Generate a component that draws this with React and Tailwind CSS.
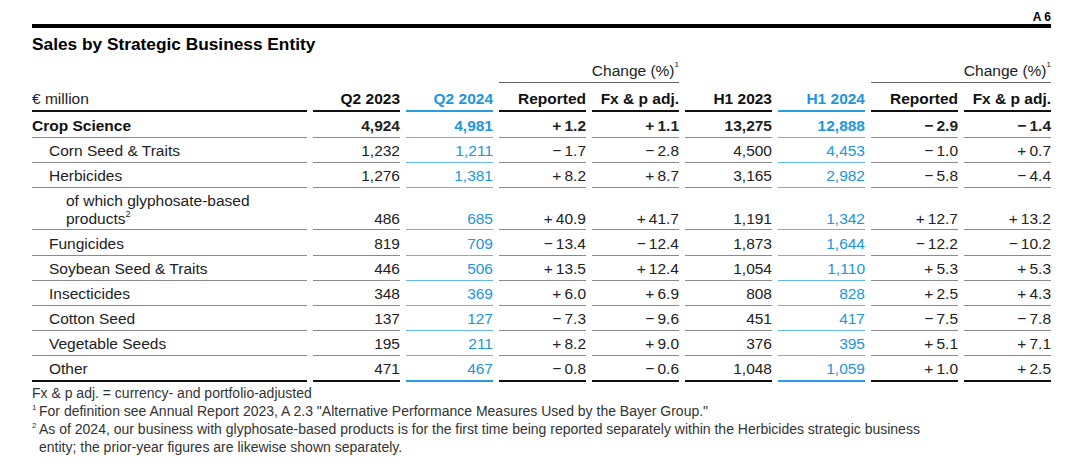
import React from "react";

// Zeilen der Tabelle: Label + 8 Werte (Q2 23, Q2 24, Rep, Fx, H1 23, H1 24, Rep, Fx)
const rows = [
  { label: "Crop Science", bold: true, indent: 0, vals: ["4,924", "4,981", "+1.2", "+1.1", "13,275", "12,888", "−2.9", "−1.4"] },
  { label: "Corn Seed & Traits", indent: 1, vals: ["1,232", "1,211", "−1.7", "−2.8", "4,500", "4,453", "−1.0", "+0.7"] },
  { label: "Herbicides", indent: 1, vals: ["1,276", "1,381", "+8.2", "+8.7", "3,165", "2,982", "−5.8", "−4.4"] },
  { label: "glyph", indent: 2, tall: true, vals: ["486", "685", "+40.9", "+41.7", "1,191", "1,342", "+12.7", "+13.2"] },
  { label: "Fungicides", indent: 1, vals: ["819", "709", "−13.4", "−12.4", "1,873", "1,644", "−12.2", "−10.2"] },
  { label: "Soybean Seed & Traits", indent: 1, vals: ["446", "506", "+13.5", "+12.4", "1,054", "1,110", "+5.3", "+5.3"] },
  { label: "Insecticides", indent: 1, vals: ["348", "369", "+6.0", "+6.9", "808", "828", "+2.5", "+4.3"] },
  { label: "Cotton Seed", indent: 1, vals: ["137", "127", "−7.3", "−9.6", "451", "417", "−7.5", "−7.8"] },
  { label: "Vegetable Seeds", indent: 1, vals: ["195", "211", "+8.2", "+9.0", "376", "395", "+5.1", "+7.1"] },
  { label: "Other", indent: 1, last: true, vals: ["471", "467", "−0.8", "−0.6", "1,048", "1,059", "+1.0", "+2.5"] },
];

const BLUE_COLS = [1, 5];

// Vorzeichen mit schmalem Abstand
const fmt = (s) => s.replace(/^([+−])/, "$1\u2009");

function Cell({ children, blue, last, tall, bold }) {
  let border = "border-b border-[#8a8a8a]";
  if (blue) border = "border-b border-[#62b6ea]";
  if (last) border = blue ? "border-b-2 border-[#2a9be0]" : "border-b-2 border-[#111]";
  return (
    <div
      className={`flex justify-end ${tall ? "items-end pb-[1px]" : "items-center pt-[3px]"} ${border} ${
        blue ? "text-[#2196dc]" : "text-[#222]"
      } ${bold ? "font-bold" : ""}`}
    >
      {children}
    </div>
  );
}

export default function App() {
  return (
    <div
      className="w-[1080px] h-[473px] bg-white pl-[32px] pt-[10px] text-[#222]"
      style={{ fontFamily: '"Liberation Sans", Arial, sans-serif' }}
    >
      <div className="w-[1019px]">
        <div className="text-right text-[12px] font-bold leading-[14px] text-black">A 6</div>
        <div className="h-[4px] bg-black" />
        <h2 className="mt-[6px] text-[17.3px] font-bold leading-[20px] text-black">
          Sales by Strategic Business Entity
        </h2>

        {/* Change (%) Zeile */}
        <div className="mt-[6px] grid grid-cols-[275px_repeat(8,87px)] gap-x-[6px] text-[15.5px] leading-[22px]">
          <div className="col-start-4 col-span-2 border-b border-[#666] text-right">
            Change (%)<sup className="text-[8px] align-[5px]">1</sup>
          </div>
          <div className="col-start-8 col-span-2 border-b border-[#666] text-right">
            Change (%)<sup className="text-[8px] align-[5px]">1</sup>
          </div>
        </div>

        {/* Kopfzeile */}
        <div className="grid h-[29px] grid-cols-[275px_repeat(8,87px)] gap-x-[6px] text-[15.5px] leading-[20px]">
          <div className="flex items-end border-b-2 border-[#111] pb-[1px]">€ million</div>
          {["Q2 2023", "Q2 2024", "Reported", "Fx & p adj.", "H1 2023", "H1 2024", "Reported", "Fx & p adj."].map(
            (h, i) => (
              <div
                key={i}
                className={`flex items-end justify-end pb-[1px] font-bold ${
                  BLUE_COLS.includes(i)
                    ? "border-b-2 border-[#2a9be0] text-[#2196dc]"
                    : "border-b-2 border-[#111] text-[#111]"
                }`}
              >
                {h}
              </div>
            )
          )}
        </div>

        {/* Datenzeilen */}
        {rows.map((r, ri) => (
          <div
            key={ri}
            className={`grid grid-cols-[275px_repeat(8,87px)] gap-x-[6px] text-[15.5px] ${
              r.tall ? "h-[43px] leading-[18px]" : r.last ? "h-[26px] leading-[22px]" : "h-[25px] leading-[22px]"
            }`}
          >
            <div
              className={`flex ${r.tall ? "items-start pt-[5px]" : "items-center pt-[3px]"} ${
                r.last ? "border-b-2 border-[#111]" : "border-b border-[#8a8a8a]"
              } ${r.indent === 1 ? "pl-[17px]" : r.indent === 2 ? "pl-[34px]" : ""} ${
                r.bold ? "font-bold text-[#111]" : ""
              }`}
            >
              {r.tall ? (
                <div>
                  of which glyphosate-based
                  <br />
                  products<sup className="text-[9px] leading-none align-[3px]">2</sup>
                </div>
              ) : (
                r.label
              )}
            </div>
            {r.vals.map((v, i) => (
              <Cell key={i} blue={BLUE_COLS.includes(i)} last={r.last} tall={r.tall} bold={r.bold}>
                {fmt(v)}
              </Cell>
            ))}
          </div>
        ))}

        {/* Fußnoten */}
        <div className="mt-[3px] text-[14px] leading-[18px] text-[#333]">
          <div>Fx &amp; p adj. = currency- and portfolio-adjusted</div>
          <div className="flex">
            <span className="w-[7px] shrink-0 text-[8px] leading-[12px]">1</span>
            <span>For definition see Annual Report 2023, A 2.3 "Alternative Performance Measures Used by the Bayer Group."</span>
          </div>
          <div className="flex">
            <span className="w-[7px] shrink-0 text-[8px] leading-[12px]">2</span>
            <span>
              As of 2024, our business with glyphosate-based products is for the first time being reported separately
              within the Herbicides strategic business
              <br />
              entity; the prior-year figures are likewise shown separately.
            </span>
          </div>
        </div>
      </div>
    </div>
  );
}
